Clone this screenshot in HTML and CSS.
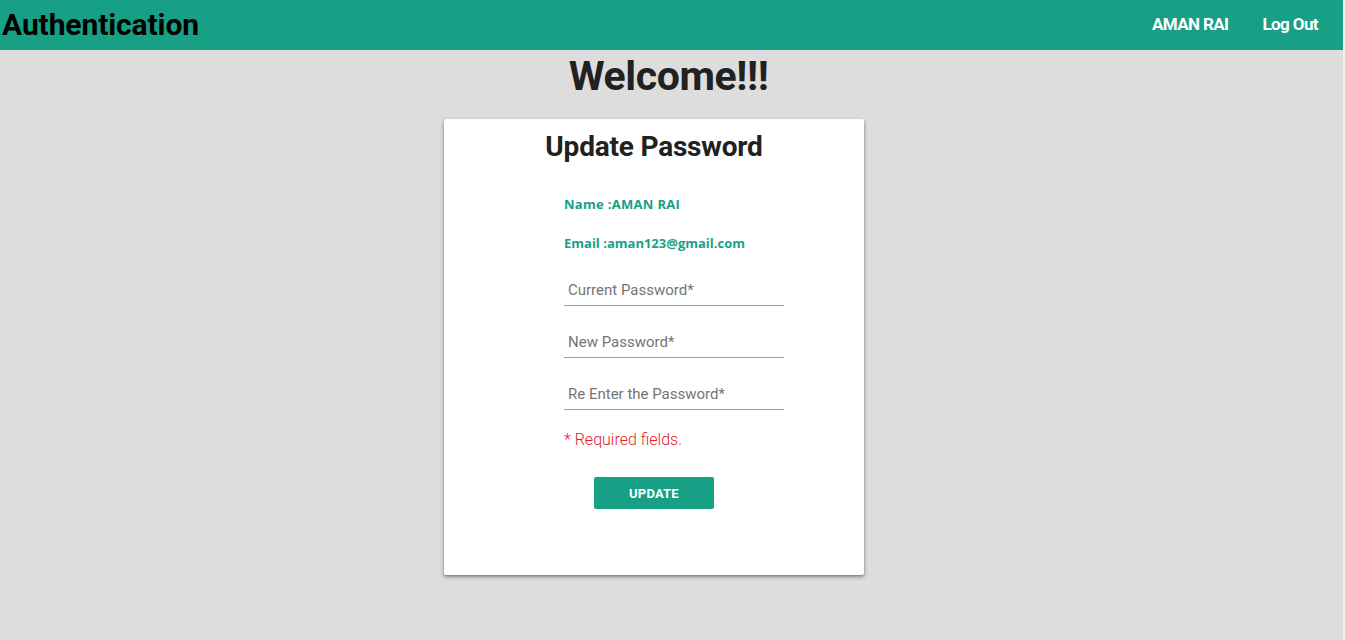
FILE: index.html
```html
<!DOCTYPE html>
<html>
<head>
<meta charset="utf-8">
<link rel="stylesheet" href="styles.css">
</head>
<body>
<div class="page">
  <header class="navbar">
    <div class="brand">Authentication</div>
    <nav class="nav-links">
      <a class="nav-link">AMAN RAI</a>
      <a class="nav-link">Log Out</a>
    </nav>
  </header>
  <main class="main">
    <h1 class="welcome">Welcome!!!</h1>
    <div class="card-wrap">
      <section class="card">
        <h2 class="card-title">Update Password</h2>
        <div class="form">
          <p class="info info-name">Name :AMAN RAI</p>
          <p class="info info-email">Email :aman123@gmail.com</p>
          <div class="field"><input class="input" type="password" placeholder="Current Password*"></div>
          <div class="field"><input class="input" type="password" placeholder="New Password*"></div>
          <div class="field"><input class="input" type="password" placeholder="Re Enter the Password*"></div>
          <p class="required">* Required fields.</p>
        </div>
        <div class="actions">
          <button class="btn">UPDATE</button>
        </div>
      </section>
    </div>
  </main>
</div>
</body>
</html>
```
FILE: styles.css
```css
html, body {
  margin: 0;
  padding: 0;
  height: 100%;
}
body {
  background: #f1f1f1;
  font-family: Roboto, "Liberation Sans", sans-serif;
  overflow: hidden;
}
.page {
  width: calc(100% - 2px);
  min-height: 100%;
  background: #dddddd;
}
.navbar {
  height: 50px;
  background: #17a086;
  display: flex;
  align-items: center;
  justify-content: space-between;
  padding: 0 25px 0 2px;
}
.brand {
  font-size: 30px;
  font-weight: 700;
  color: #000;
  letter-spacing: -0.1px;
  margin-top: -2px;
}
.nav-links {
  display: flex;
  gap: 34px;
  margin-top: -2px;
}
.nav-link {
  color: #fff;
  font-weight: 700;
  font-size: 17px;
  letter-spacing: -0.6px;
}
.main {
  display: flex;
  flex-direction: column;
  align-items: stretch;
}
.welcome {
  margin: 2px 0 0;
  text-align: center;
  font-size: 41px;
  font-weight: 700;
  color: #212121;
  line-height: 48px;
  letter-spacing: -0.4px;
  padding-right: 6px;
}
.card-wrap {
  display: flex;
  justify-content: center;
  padding-right: 35px;
  padding-top: 19px;
}
.card {
  width: 420px;
  height: 456px;
  background: #fff;
  border-radius: 2px;
  box-shadow: 0 2px 4px rgba(0,0,0,0.35), 0 1px 2px rgba(0,0,0,0.2);
  display: flex;
  flex-direction: column;
}
.card-title {
  margin: 11px 0 0;
  text-align: center;
  font-size: 28px;
  font-weight: 700;
  color: #212121;
  line-height: 34px;
  letter-spacing: -0.2px;
}
.form {
  margin-left: 120px;
  width: 220px;
  display: flex;
  flex-direction: column;
  padding-top: 30px;
}
.info {
  margin: 0;
  line-height: 20px;
  font-family: "Open Sans", "DejaVu Sans", sans-serif;
  font-weight: 700;
  font-size: 13px;
  color: #17a086;
}
.info-name {
  margin-bottom: 19px;
  letter-spacing: 0.3px;
}
.info-email {
  margin-bottom: 1px;
}
.field {
  height: 52px;
  display: flex;
  align-items: flex-end;
}
.input {
  width: 100%;
  box-sizing: border-box;
  border: 0;
  border-bottom: 1px solid #9e9e9e;
  outline: none;
  padding: 5px 4px 6px;
  font-family: Roboto, sans-serif;
  font-size: 15px;
  color: #333;
  background: transparent;
}
.input::placeholder {
  color: #757575;
}
.required {
  margin: 20px 0 0;
  font-size: 16px;
  font-weight: 300;
  color: #e3202c;
  line-height: 20px;
}
.actions {
  display: flex;
  justify-content: center;
  padding-top: 27px;
}
.btn {
  width: 120px;
  height: 32px;
  border: 0;
  border-radius: 2px;
  background: #17a086;
  color: #fff;
  font-family: Roboto, sans-serif;
  font-weight: 700;
  font-size: 13px;
  letter-spacing: 0.2px;
}
```
